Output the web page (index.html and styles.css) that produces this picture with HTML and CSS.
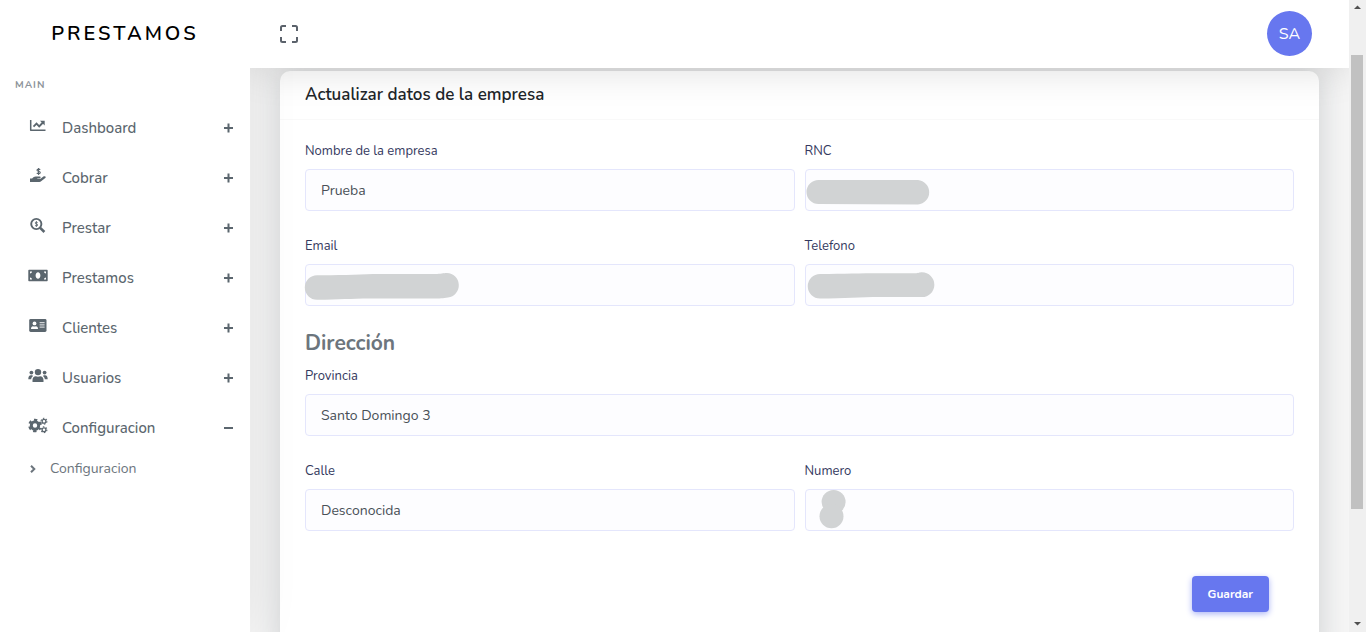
FILE: index.html
```html
<!DOCTYPE html>
<html lang="es">
<head>
<meta charset="utf-8">
<meta name="viewport" content="width=device-width, initial-scale=1">
<title>Prestamos</title>
<link rel="stylesheet" href="styles.css">
</head>
<body>
<aside class="sidebar">
  <a class="brand" href="#">PRESTAMOS</a>
  <h2 class="menu-title">MAIN</h2>
  <nav class="menu">
    <a class="menu-item" href="#">
      <svg class="icon" viewBox="0 0 20 16"><path d="M2.7 2v10.2H17.5" fill="none" stroke="currentColor" stroke-width="1.5" stroke-linejoin="round"/><path d="M5.5 8.7l3-3 2.7 2.7 3.7-3.9" fill="none" stroke="currentColor" stroke-width="1.9"/><path d="M12 2.8h4.7v4.7z" fill="currentColor"/></svg>
      <span>Dashboard</span><svg class="toggle" viewBox="0 0 10 10"><path d="M0 5h9M4.500 .5v9"/></svg></a>
    <a class="menu-item" href="#">
      <svg class="icon" viewBox="0 0 20 16"><path d="M12.2 1.7C11.7 1 9 .8 9 2.2c0 1.3 3.3.8 3.3 2.3 0 1.6-2.9 1.3-3.5.4M10.6 0v7" fill="none" stroke="currentColor" stroke-width="1.1"/><path d="M2 10.4h2.1l1.3-1.1c.8-.6 1.5-.8 2.4-.8h4c1.2 0 1.1 1.7-.1 1.7H9.3v.5h3.2l2.9-2.1c1.4-1 3.3.2 1.9 1.4l-4.2 3.300c-.5.4-1 .6-1.7.6H2z" fill="currentColor"/></svg>
      <span>Cobrar</span><svg class="toggle" viewBox="0 0 10 10"><path d="M0 5h9M4.500 .5v9"/></svg></a>
    <a class="menu-item" href="#">
      <svg class="icon" viewBox="0 0 20 16"><circle cx="8.300" cy="6" r="5.100" fill="none" stroke="currentColor" stroke-width="1.900"/><path d="M12.200 9.800l4.200 4.200" stroke="currentColor" stroke-width="2.600"/><path d="M9.700 4.700c-.6-.6-2.6-.7-2.6.3 0 1.100 2.700.8 2.700 2 0 1.100-2.100 1-2.800.3M8.400 3.100v5.800" fill="none" stroke="currentColor" stroke-width=".9"/></svg>
      <span>Prestar</span><svg class="toggle" viewBox="0 0 10 10"><path d="M0 5h9M4.500 .5v9"/></svg></a>
    <a class="menu-item" href="#">
      <svg class="icon" viewBox="0 0 20 16"><path fill="currentColor" fill-rule="evenodd" d="M1 1.800h18c.4 0 .7.3.7.7v10c0 .4-.3.7-.7.7H1c-.4 0-.7-.3-.7-.7v-10c0-.4.3-.7.7-.7zM10 4.300c-1.400 0-2.400 1.400-2.400 3.200s1 3.200 2.400 3.200 2.400-1.400 2.400-3.200-1-3.200-2.400-3.200zM2 3.400v2c1.100 0 2-.9 2-2zm14 0c0 1.100.9 2 2 2v-2zM2 9.600v2h2c0-1.100-.9-2-2-2zm16 0c-1.100 0-2 .9-2 2h2z"/></svg>
      <span>Prestamos</span><svg class="toggle" viewBox="0 0 10 10"><path d="M0 5h9M4.500 .5v9"/></svg></a>
    <a class="menu-item" href="#">
      <svg class="icon" viewBox="0 0 20 16"><rect x="1.200" y="1" width="17.300" height="13" rx="1.400" fill="currentColor"/><circle cx="6.500" cy="5.400" r="1.900" fill="#fff"/><path d="M3 10.900c0-1.700.8-2.700 2-2.700.8.4 2.100.4 2.900 0 1.300 0 2.100 1 2.100 2.700z" fill="#fff"/><path d="M11.600 4.700h5M11.600 6.900h5M11.600 9.100h5" stroke="#fff" stroke-width=".9"/></svg>
      <span>Clientes</span><svg class="toggle" viewBox="0 0 10 10"><path d="M0 5h9M4.500 .5v9"/></svg></a>
    <a class="menu-item" href="#">
      <svg class="icon" viewBox="0 0 20 16"><g fill="currentColor"><circle cx="10" cy="4.100" r="3.200"/><circle cx="3.400" cy="4.600" r="1.900"/><circle cx="16.600" cy="4.600" r="1.900"/><path d="M4.500 14v-2c0-2.300 1.400-3.700 3.300-3.700 1.300.6 3.100.6 4.400 0 1.900 0 3.300 1.400 3.300 3.700v2zM.3 11.300c0-2.400.9-4 2.600-4 .9 0 1.600.1 2.200.6-1.300.9-1.800 1.900-1.900 3.400zM19.700 11.300c0-2.400-.9-4-2.600-4-.9 0-1.600.1-2.200.6 1.300.9 1.800 1.900 1.900 3.400z"/></g></svg>
      <span>Usuarios</span><svg class="toggle" viewBox="0 0 10 10"><path d="M0 5h9M4.500 .5v9"/></svg></a>
    <a class="menu-item" href="#" aria-expanded="true">
      <svg class="icon" viewBox="0 0 20 16"><g fill="none" stroke="currentColor"><circle cx="7" cy="7.500" r="3.700" stroke-width="3"/><circle cx="7" cy="7.500" r="5.700" stroke-width="2.200" stroke-dasharray="3.100 2.870" stroke-dashoffset="1.550" transform="rotate(30 7 7.500)"/><circle cx="16" cy="3.200" r="1.900" stroke-width="1.300"/><circle cx="16" cy="3.200" r="2.900" stroke-width="1.100" stroke-dasharray="1.500 1.537"/><circle cx="16" cy="11.700" r="1.900" stroke-width="1.300"/><circle cx="16" cy="11.700" r="2.900" stroke-width="1.100" stroke-dasharray="1.500 1.537"/></g></svg>
      <span>Configuracion</span><svg class="toggle" viewBox="0 0 10 10"><path d="M0 5h9"/></svg></a>
    <a class="submenu-item" href="#"><svg class="chevron" viewBox="0 0 6 8"><path d="M1 .7L4.300 4 1 7.300"/></svg>Configuracion</a>
  </nav>
</aside>

<div class="page">
  <header class="topbar">
    <button class="fullscreen" type="button" aria-label="Pantalla completa"><svg viewBox="0 0 18 18"><path d="M1 6V2.500Q1 1 2.500 1H6M12 1h3.500Q17 1 17 2.500V6M17 12v3.500q0 1.500-1.500 1.500H12M6 17H2.500Q1 17 1 15.500V12"/></svg></button>
    <button class="avatar" type="button">SA</button>
  </header>
  <main class="content">
    <form class="card">
      <h1 class="card-title">Actualizar datos de la empresa</h1>
      <div class="card-body">
        <div class="field"><label for="nombre">Nombre de la empresa</label><div class="control"><input id="nombre" type="text" value="Prueba"></div></div>
        <div class="field"><label for="rnc">RNC</label><div class="control"><input id="rnc" type="text"><svg class="mask" viewBox="0 0 160 42"><path d="M13.500 11H113a12.300 12.300 0 0 1 0 24.500L13.500 35a12 12 0 0 1 0-24z"/></svg></div></div>
        <div class="field"><label for="email">Email</label><div class="control"><input id="email" type="email"><svg class="mask" viewBox="0 0 160 42"><path d="M12 11.300C40 11.500 55 10 75 10h55c6 0 8-1 12-1a12.300 12.300 0 0 1 1 24.500c-5 .800-8 1-15 1H65c-20 0-30 1.200-53 1.200a12.200 12.200 0 0 1 0-24.400z"/></svg></div></div>
        <div class="field"><label for="telefono">Telefono</label><div class="control"><input id="telefono" type="tel"><svg class="mask" viewBox="0 0 160 42"><path d="M15 10c25 0 40-.700 60-.700h35c4 0 4-1 7-1a12.300 12.300 0 0 1 0 24.700H75c-20 0-35 1.500-60 1.500A12.200 12.200 0 0 1 15 10z"/></svg></div></div>
        <h2 class="section-title">Dirección</h2>
        <div class="field wide"><label for="provincia">Provincia</label><div class="control"><input id="provincia" type="text" value="Santo Domingo 3"></div></div>
        <div class="field"><label for="calle">Calle</label><div class="control"><input id="calle" type="text" value="Desconocida"></div></div>
        <div class="field"><label for="numero">Numero</label><div class="control"><input id="numero" type="text"><svg class="mask" viewBox="0 0 160 42"><circle cx="28.600" cy="13" r="12"/><circle cx="26.500" cy="27.300" r="12"/></svg></div></div>
        <div class="actions"><button class="save" type="submit">Guardar</button></div>
      </div>
    </form>
  </main>
</div>

<div class="scrollbar" aria-hidden="true">
  <svg viewBox="0 0 17 17"><path d="M5 9l3.500-3.500L12 9z"/></svg>
  <div class="track"><div class="thumb"></div></div>
  <svg viewBox="0 0 17 17"><path d="M5 7l3.500 3.500L12 7z"/></svg>
</div>
</body>
</html>
```

FILE: styles.css
```css
* { box-sizing: border-box; }

body {
  display: flex;
  height: 100vh;
  margin: 0;
  overflow: hidden;
  background: #f5f5f5;
  color: #5b626b;
  font: 14px/20px Nunito, Lato, sans-serif;
}

h1, h2 { margin: 0; }
a { color: inherit; text-decoration: none; }
button, input { font: inherit; }

.sidebar {
  flex: 0 0 250px;
  z-index: 1;
  background: #fff;
  box-shadow: 0 0 50px rgba(0, 0, 0, 0.08);
}

.brand {
  display: block;
  padding: 19px 0 18px;
  color: #000;
  font-size: 20px;
  font-weight: 600;
  line-height: 30px;
  letter-spacing: 3px;
  text-align: center;
}

.menu-title {
  padding: 8px 15px;
  color: #8d949a;
  font-size: 10px;
  font-weight: 700;
  line-height: 20px;
  letter-spacing: 1px;
}

.menu { display: flex; flex-direction: column; }

.menu-item {
  display: flex;
  align-items: center;
  height: 50px;
  padding: 0 16px 0 28px;
  color: #5b666e;
  font-size: 15px;
  font-weight: 500;
}

.icon { width: 20px; height: 16px; margin: 0 14px 4px 0; overflow: visible; }
.toggle { width: 10px; height: 10px; margin-left: auto; }
.toggle path, .chevron path { fill: none; stroke: currentColor; stroke-width: 2; }

.submenu-item {
  display: flex;
  align-items: center;
  gap: 14px;
  padding: 6px 30px;
  color: #6c757d;
}

.chevron { width: 6px; height: 8px; }

.page { display: flex; flex: 1; flex-direction: column; min-width: 0; }

.topbar {
  display: flex;
  flex: 0 0 68px;
  align-items: center;
  justify-content: space-between;
  padding: 0 37px 1px 30px;
  z-index: 2;
  background: #fff;
  box-shadow: 0 0 40px rgba(0, 0, 0, 0.15);
  clip-path: inset(0 0 -60px 0);
}

.fullscreen { padding: 0; border: 0; background: none; line-height: 0; }
.fullscreen svg { width: 18px; height: 18px; fill: none; stroke: #5b626b; stroke-width: 2; }

.avatar {
  width: 45px;
  height: 45px;
  padding: 0;
  border: 0;
  border-radius: 50%;
  background: #6777ef;
  color: #fff;
  font-size: 16px;
}

.content { flex: 1; padding: 3px 30px 0; min-height: 0; }

.card {
  padding-bottom: 30px;
  border-radius: 10px;
  background: #fff;
  box-shadow: 0 0 30px rgba(30, 40, 50, 0.18);
}

.card-title {
  padding: 12px 25px;
  border-bottom: 1px solid #f9f9f9;
  color: #212529;
  font-size: 17px;
  font-weight: 600;
  line-height: 24px;
}

.card-body {
  display: grid;
  grid-template-columns: 1fr 1fr;
  gap: 25px 10px;
  padding: 21px 25px;
}

.wide, .section-title, .actions { grid-column: 1 / -1; }

.field label {
  display: block;
  width: fit-content;
  margin-bottom: 8px;
  color: #34395e;
  font-size: 13px;
  line-height: 20px;
}

.control { position: relative; }

.control input {
  display: block;
  width: 100%;
  height: 42px;
  padding: 0 15px;
  border: 1px solid #e4e6fc;
  border-radius: 4px;
  background: #fdfdff;
  color: #495057;
}

.mask {
  position: absolute;
  top: 0;
  left: 0;
  width: 160px;
  height: 42px;
  overflow: visible;
  fill: #d1d3d4;
  pointer-events: none;
}

.section-title {
  margin-bottom: -14px;
  color: #6c757d;
  font-size: 21px;
  font-weight: 700;
  line-height: 24px;
}

.actions { padding: 20px 25px 0; text-align: right; }

.save {
  height: 36px;
  padding: 0 16px;
  border: 0;
  border-radius: 4px;
  background: #6777ef;
  box-shadow: 0 2px 6px #acb5f6;
  color: #fff;
  font-size: 12px;
  font-weight: 700;
}

.scrollbar {
  display: flex;
  flex: 0 0 17px;
  flex-direction: column;
  z-index: 4;
  background: #f0f0f0;
}

.scrollbar svg { width: 17px; height: 17px; fill: #505050; }
.track { flex: 1; padding: 38px 3px 0 2px; }
.thumb { height: 81%; background: #c1c1c1; }
```
